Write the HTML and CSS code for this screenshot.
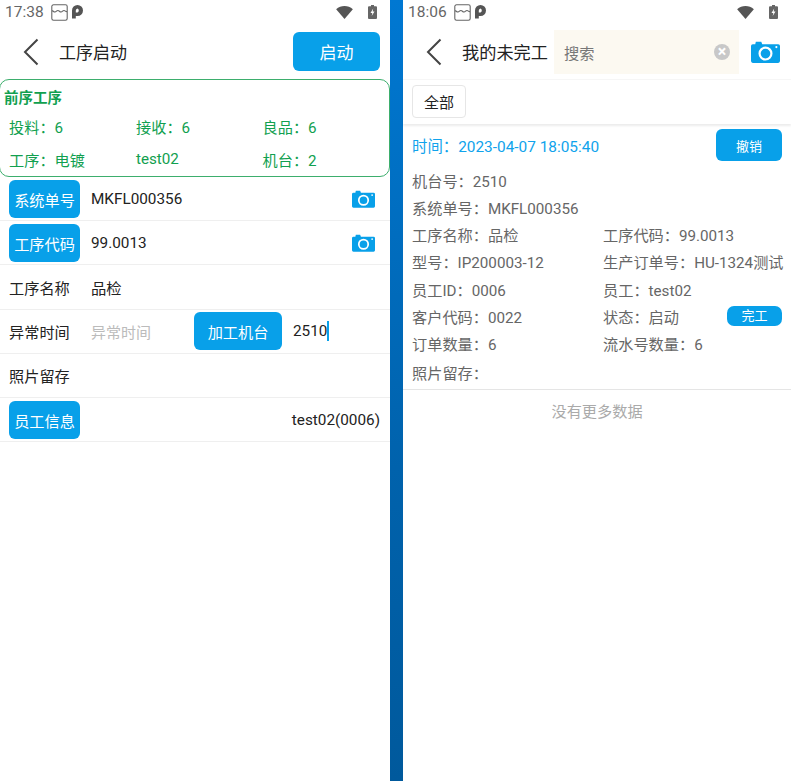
FILE: index.html
```html
<!DOCTYPE html>
<html lang="zh-CN">

<head>
  <meta charset="UTF-8" />
  <title>工序启动</title>
  <meta name="viewport" content="width=device-width, initial-scale=1.0" />
  <link rel="stylesheet" href="styles.css">
</head>

<body>
  <svg class="defs" width="0" height="0">
    <symbol id="camera" viewBox="0 0 24 18">
      <path fill="#08a0e9" fill-rule="evenodd" d="M4 .5h4.500l.8 2H22.500A1.500 1.500 0 0 1 24 4V16.500A1.500 1.500 0 0 1 22.500 18H1.500A1.500 1.500 0 0 1 0 16.500V4A1.500 1.500 0 0 1 1.500 2.500H3.500zM12 4.500a5.800 5.800 0 1 0 0 11.600 5.800 5.800 0 0 0 0-11.600zM12 6.300a4 4 0 1 1 0 8 4 4 0 0 1 0-8zM21 4a.9.900 0 1 0 0 1.800.9.900 0 0 0 0-1.800z" />
    </symbol>
    <symbol id="back" viewBox="0 0 16 28">
      <path fill="none" stroke="#444" stroke-width="2" d="M14.500 1.500 2 14l12.500 12.500" />
    </symbol>
    <symbol id="notify" viewBox="0 0 17 17">
      <path fill="none" stroke="#666" stroke-width="1.100" d="M2.500.8h12a1.700 1.700 0 0 1 1.700 1.700v12a1.700 1.700 0 0 1-1.700 1.700h-12A1.700 1.700 0 0 1 .8 14.500v-12A1.700 1.700 0 0 1 2.500.8zM.8 6.500c1.500 0 1.500 1.500 3.100 1.500s1.500-1.500 3-1.500 1.500 1.500 3.100 1.500 1.500-1.500 3-1.500 1.500 1.500 3.200 1" />
    </symbol>
    <symbol id="pk" viewBox="0 0 12 14">
      <path fill="#555" fill-rule="evenodd" d="M0 13.500V5.500A5.500 5.500 0 1 1 5.500 11H3.800v2.500zM5.500 3.500a2.200 2.200 0 0 0-1.700 2v2h1.700a2.200 2.200 0 0 0 0-4z" />
    </symbol>
    <symbol id="wifi" viewBox="0 0 18 14">
      <path fill="#555" d="M0 3.500C5-1 13-1 18 3.500L9 14z" />
    </symbol>
    <symbol id="battery" viewBox="0 0 9 14">
      <path fill="#666" fill-rule="evenodd" d="M3 0h3v1.200h2a1 1 0 0 1 1 1V13a1 1 0 0 1-1 1H1a1 1 0 0 1-1-1V2.200a1 1 0 0 1 1-1h2zM5.200 3.500 2.500 8h1.800l-.6 3 2.800-4.500H4.700z" />
    </symbol>
  </svg>

  <!-- Left phone -->
  <div class="phone phone-left">
    <div class="statusbar">
      <span class="clock">17:38</span>
      <svg class="ic-notify"><use href="#notify" /></svg>
      <svg class="ic-pk"><use href="#pk" /></svg>
      <span class="spacer"></span>
      <svg class="ic-wifi"><use href="#wifi" /></svg>
      <svg class="ic-battery"><use href="#battery" /></svg>
    </div>

    <div class="topbar">
      <svg class="ic-back"><use href="#back" /></svg>
      <h1>工序启动</h1>
      <button class="btn btn-start">启动</button>
    </div>

    <div class="prev-card">
      <div class="prev-title">前序工序</div>
      <div class="prev-grid">
        <span>投料：6</span><span>接收：6</span><span>良品：6</span>
        <span>工序：电镀</span><span>test02</span><span>机台：2</span>
      </div>
    </div>

    <div class="form">
      <div class="row row-scan">
        <button class="btn btn-label">系统单号</button>
        <span class="value">MKFL000356</span>
        <svg class="ic-camera"><use href="#camera" /></svg>
      </div>
      <div class="row row-scan">
        <button class="btn btn-label">工序代码</button>
        <span class="value">99.0013</span>
        <svg class="ic-camera"><use href="#camera" /></svg>
      </div>
      <div class="row">
        <span class="label">工序名称</span>
        <span class="value">品检</span>
      </div>
      <div class="row row-split">
        <span class="label">异常时间</span>
        <span class="value placeholder">异常时间</span>
        <button class="btn btn-machine">加工机台</button>
        <span class="machine-value">2510<i class="caret"></i></span>
      </div>
      <div class="row">
        <span class="label">照片留存</span>
      </div>
      <div class="row row-scan">
        <button class="btn btn-label">员工信息</button>
        <span class="value value-right">test02(0006)</span>
      </div>
    </div>
  </div>

  <div class="divider"></div>

  <!-- Right phone -->
  <div class="phone phone-right">
    <div class="statusbar">
      <span class="clock">18:06</span>
      <svg class="ic-notify"><use href="#notify" /></svg>
      <svg class="ic-pk"><use href="#pk" /></svg>
      <span class="spacer"></span>
      <svg class="ic-wifi"><use href="#wifi" /></svg>
      <svg class="ic-battery"><use href="#battery" /></svg>
    </div>

    <div class="searchbar">
      <svg class="ic-back"><use href="#back" /></svg>
      <h1>我的未完工</h1>
      <div class="search">
        <span>搜索</span>
        <span class="clear">×</span>
      </div>
      <svg class="ic-camera-lg"><use href="#camera" /></svg>
    </div>

    <div class="filter">
      <button class="filter-btn">全部</button>
    </div>

    <div class="record">
      <div class="record-head">
        <span class="record-time">时间：2023-04-07 18:05:40</span>
        <button class="btn btn-cancel">撤销</button>
      </div>
      <div class="record-grid">
        <span class="wide">机台号：2510</span>
        <span class="wide">系统单号：MKFL000356</span>
        <span>工序名称：品检</span><span>工序代码：99.0013</span>
        <span>型号：IP200003-12</span><span>生产订单号：HU-1324测试</span>
        <span>员工ID：0006</span><span>员工：test02</span>
        <span>客户代码：0022</span>
        <span class="status-cell">状态：启动<button class="btn btn-done">完工</button></span>
        <span>订单数量：6</span><span>流水号数量：6</span>
        <span class="wide photo-row">照片留存：</span>
      </div>
    </div>

    <div class="no-more">没有更多数据</div>
  </div>
</body>

</html>
```

FILE: styles.css
```css
* {
  box-sizing: border-box;
  margin: 0;
  padding: 0;
}

body {
  font-family: Roboto, 'Noto Sans CJK SC', sans-serif;
  display: flex;
  height: 781px;
  overflow: hidden;
  background-color: white;
  color: #222;
  font-size: 15.200px;
}

.defs {
  position: absolute;
}

button {
  font-family: inherit;
  border: none;
}

.phone-left {
  width: 390px;
}

.phone-right {
  width: 388px;
  flex: 1;
}

.divider {
  width: 13px;
  background: linear-gradient(#0078d2, #0062ac 60%, #00599c);
}

/* Status bar */
.statusbar {
  display: flex;
  align-items: center;
  height: 24px;
  padding-left: 5px;
  color: #666;
}

.clock {
  font-size: 15.500px;
  width: 42px;
}

.spacer {
  flex: 1;
}

.ic-notify {
  width: 17px;
  height: 17px;
  margin-left: 4px;
}

.ic-pk {
  width: 12px;
  height: 14px;
  margin-left: 4px;
}

.ic-wifi {
  width: 17px;
  height: 13px;
}

.ic-battery {
  width: 9px;
  height: 14px;
  margin: 0 13px 0 15px;
}

/* Top bars */
.topbar {
  display: flex;
  align-items: center;
  height: 55px;
  padding: 0 10px 0 23px;
}

.ic-back {
  width: 16px;
  height: 28px;
  flex-shrink: 0;
}

h1 {
  font-size: 17px;
  font-weight: 400;
}

.topbar h1 {
  margin-left: 20px;
  flex: 1;
}

.btn {
  background-color: #08a0e9;
  color: white;
  font-size: 15.200px;
  border-radius: 6px;
}

.btn-start {
  width: 87px;
  height: 39px;
  font-size: 17px;
}

/* Previous process card */
.prev-card {
  height: 98px;
  margin-left: -1px;
  border: 1.500px solid #3dae6d;
  border-radius: 10px;
  padding: 9px 0 0 4px;
  color: #11a04f;
}

.prev-title {
  font-size: 14.500px;
  font-weight: 700;
  line-height: 20px;
}

.prev-grid {
  display: grid;
  grid-template-columns: 127px 126.500px 1fr;
  grid-auto-rows: 33px;
  align-items: center;
  padding-left: 5px;
}

/* Form */
.row {
  display: flex;
  align-items: center;
  height: 44.200px;
  padding: 0 10px 0 9px;
  border-bottom: 1px solid #efefef;
}

.btn-label {
  width: 71px;
  height: 38px;
  flex-shrink: 0;
}

.label {
  width: 82px;
  flex-shrink: 0;
}

.value {
  font-size: 15.300px;
  flex: 1;
}

.row-scan .value {
  margin-left: 11px;
}

.placeholder {
  color: #bbb;
  font-size: 15px;
}

.value-right {
  text-align: right;
}

.ic-camera {
  width: 23px;
  height: 18px;
  margin-right: 5px;
}

.row-split {
  padding-right: 0;
}

.btn-machine {
  width: 88px;
  height: 38px;
  flex-shrink: 0;
  margin-right: 11px;
}

.machine-value {
  display: flex;
  align-items: center;
  width: 97px;
  font-size: 15.300px;
}

.caret {
  width: 2px;
  height: 20px;
  background-color: #08a0e9;
}

/* Search header */
.searchbar {
  display: flex;
  align-items: center;
  height: 56px;
  padding-left: 23px;
  border-bottom: 1px solid #f6f6f6;
}

.searchbar h1 {
  margin-left: 20px;
  width: 92px;
  flex-shrink: 0;
  font-size: 17.200px;
  white-space: nowrap;
}

.search {
  display: flex;
  align-items: center;
  justify-content: space-between;
  width: 185px;
  height: 44px;
  padding: 0 9px 0 10px;
  background-color: #fcf9f1;
  color: #777;
}

.clear {
  width: 16px;
  height: 16px;
  border-radius: 50%;
  background-color: #c8c8c8;
  color: white;
  font-size: 16px;
  font-weight: 700;
  line-height: 16px;
  text-align: center;
}

.ic-camera-lg {
  width: 29px;
  height: 22px;
  margin-left: 12px;
}

.filter {
  height: 44px;
  padding: 5px 0 0 9px;
  box-shadow: 0 2px 2px rgba(0, 0, 0, 0.08);
}

.filter-btn {
  width: 54px;
  height: 33px;
  background-color: white;
  border: 1px solid #e6e6e6;
  border-radius: 4px;
  color: #222;
  font-size: 15px;
}

/* Record */
.record {
  padding: 5px 9px 0 9px;
  border-bottom: 1px solid #e5e5e5;
  color: #666;
  height: 266px;
}

.record-head {
  display: flex;
  align-items: center;
  justify-content: space-between;
  height: 32px;
}

.record-time {
  color: #10a3ec;
  font-size: 15.400px;
}

.btn-cancel {
  width: 66px;
  height: 32px;
  font-size: 13px;
}

.record-grid {
  display: grid;
  grid-template-columns: 191px minmax(0, 1fr);
  grid-auto-rows: 27.250px;
  align-items: center;
  margin-top: 5px;
  white-space: nowrap;
}

.wide {
  grid-column: 1 / 3;
}

.photo-row {
  padding-top: 4px;
}

.status-cell {
  display: flex;
  align-items: center;
  justify-content: space-between;
}

.btn-done {
  width: 55px;
  height: 20px;
  font-size: 13px;
  line-height: 20px;
  border-radius: 7px;
}

.no-more {
  height: 44px;
  line-height: 44px;
  text-align: center;
  color: #aaa;
}
```
